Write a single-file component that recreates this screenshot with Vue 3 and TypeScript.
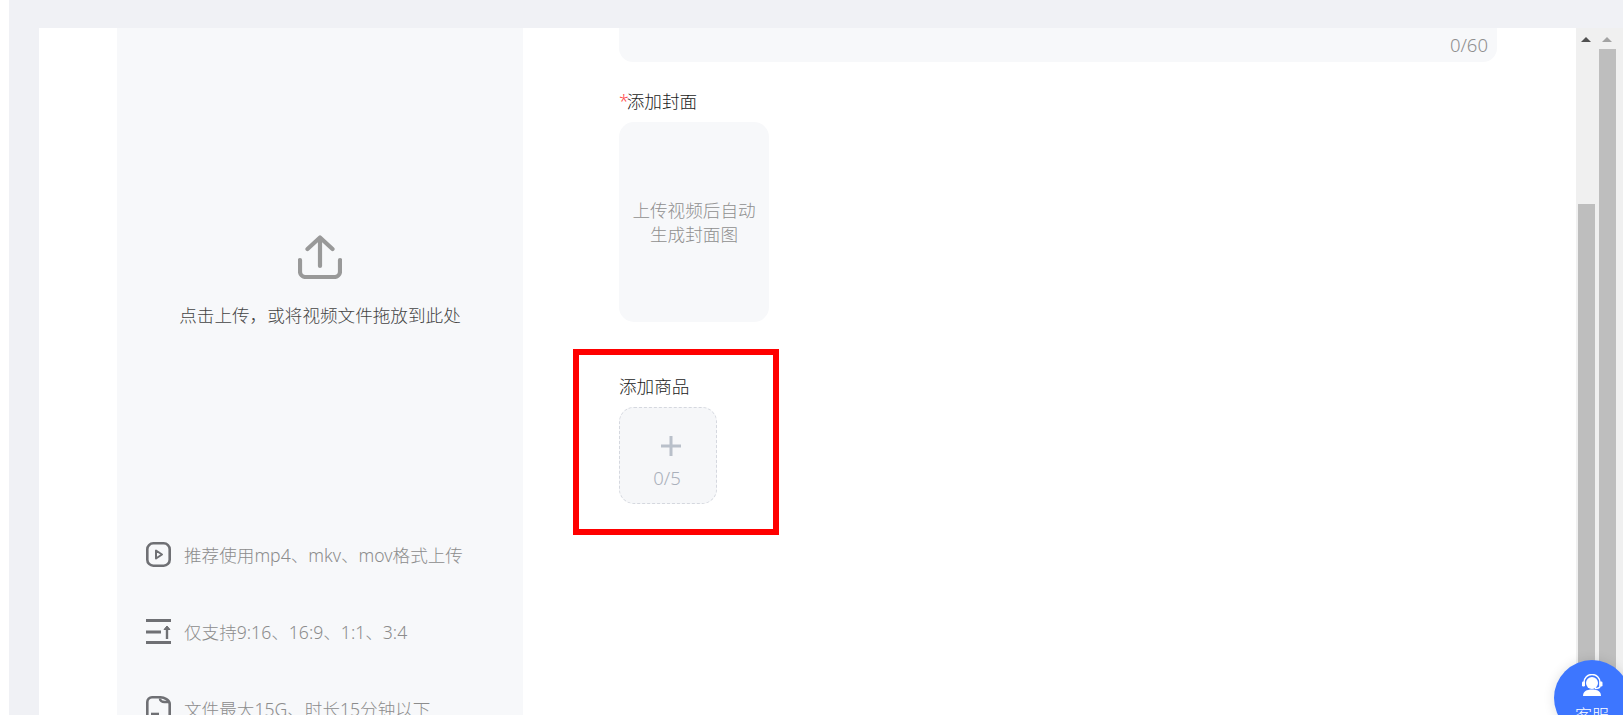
<template>
  <div class="page">
    <div class="topbar"></div>
    <div class="body">
      <main class="card">
        <aside class="upload-panel">
          <svg class="upload-icon" width="44" height="44" viewBox="0 0 44 44" fill="none" stroke="#999" stroke-width="4.200">
            <path d="M22 31V4M9.500 14 22 2.500 34.500 14" stroke-linecap="round" stroke-linejoin="round" />
            <path d="M2 25v11.500a5.500 5.500 0 0 0 5.500 5.500h29a5.500 5.500 0 0 0 5.500-5.500V25" stroke-linecap="round" />
          </svg>
          <p class="upload-text">点击上传，或将视频文件拖放到此处</p>
          <ul class="tips">
            <li v-for="tip in tips" :key="tip.text" class="tip">
              <svg width="25" height="25" viewBox="0 0 25 25" fill="none" stroke="#6f7074" stroke-width="2.600">
                <template v-if="tip.icon === 'play'">
                  <rect x="1.300" y="1.300" width="22.400" height="22.400" rx="6" />
                  <path d="M10 8.500v8l6-4z" stroke-width="2" stroke-linejoin="round" />
                </template>
                <template v-else-if="tip.icon === 'ratio'">
                  <path d="M0 1.500h25M0 13h15M0 23.500h25" stroke-width="3" />
                  <path d="M21 20V9" stroke-width="2.400" />
                  <path d="M18 10.500 21 7l3 3.500z" fill="#6f7074" stroke-width="1" />
                </template>
                <template v-else>
                  <path d="M1.300 6a4.700 4.700 0 0 1 4.700-4.700h8.500c3.500 0 9.200 2.500 9.200 6.500V20a4.700 4.700 0 0 1-4.700 4.700H6A4.700 4.700 0 0 1 1.300 20z" />
                  <path d="M14 2.500c0 2 2 3.500 4.500 3.500h4.500" />
                  <path d="M5 18h8" />
                </template>
              </svg>
              <span>{{ tip.text }}</span>
            </li>
          </ul>
        </aside>

        <section class="form">
          <div class="title-input">
            <span class="count">0/60</span>
          </div>

          <div class="field-label cover-label"><em>*</em>添加封面</div>
          <div class="cover-box">上传视频后自动生成封面图</div>

          <div class="field-label goods-label">添加商品</div>
          <button class="goods-add" type="button">
            <svg width="22" height="22" viewBox="0 0 22 22" stroke="#b9c0ca" stroke-width="3">
              <path d="M11 1v20M1 11h20" />
            </svg>
            <span>0/5</span>
          </button>
        </section>
      </main>

      <div class="scrollbar">
        <i class="arrow dark"></i>
        <div class="thumb inner"></div>
      </div>
      <div class="scrollbar outer">
        <i class="arrow"></i>
        <div class="thumb"></div>
      </div>
    </div>

    <div class="highlight"></div>

    <div class="service">
      <svg width="22" height="22" viewBox="0 0 22 22" fill="#fff">
        <circle cx="11" cy="9" r="6" />
        <path d="M2 22c0-4.500 3.500-6.500 9-6.500s9 2 9 6.500z" />
        <path d="M3 10V8.500a8 8 0 0 1 16 0V12c0 1.500-1.500 2.500-5 2.500" fill="none" stroke="#fff" stroke-width="1.500" />
        <rect x="1" y="7.500" width="3" height="5" rx="1.200" />
        <rect x="18.500" y="7.500" width="3" height="5" rx="1.200" />
      </svg>
      <span>客服</span>
    </div>
  </div>
</template>

<script setup lang="ts">
type Tip = { icon: 'play' | 'ratio' | 'file'; text: string }

const tips: Tip[] = [
  { icon: 'play', text: '推荐使用mp4、mkv、mov格式上传' },
  { icon: 'ratio', text: '仅支持9:16、16:9、1:1、3:4' },
  { icon: 'file', text: '文件最大15G、时长15分钟以下' },
]
</script>

<style>
html, body { margin: 0; background: #fff; overflow: hidden; }
</style>

<style scoped>
.page {
  position: relative;
  height: 715px;
  margin-left: 9px;
  overflow: hidden;
  background: #f0f1f5;
  font-family: "Noto Sans", "Noto Sans CJK SC", sans-serif;
  font-size: 17.6px;
  font-weight: 300;
}
.topbar { height: 28px; }
.body { display: flex; height: 687px; padding-left: 30px; }
.card { display: flex; flex: 1; min-width: 0; padding-left: 78px; background: #fff; }

.upload-panel {
  display: flex;
  flex-direction: column;
  align-items: center;
  flex: none;
  width: 406px;
  background: #f7f8fa;
}
.upload-icon { flex: none; margin-top: 207px; }
.upload-text { flex: none; margin: 23px 0 0; line-height: 26px; color: #444; }
.tips { flex: none; align-self: stretch; margin: 214px 0 0; padding: 0 0 0 29px; list-style: none; }
.tip { display: flex; align-items: center; gap: 13px; height: 25px; margin-bottom: 52px; color: #8c8c8c; white-space: nowrap; }
.tip svg { flex: none; }

.form { flex: 1; min-width: 0; padding: 0 79px 0 96px; }
.title-input {
  display: flex;
  align-items: flex-end;
  justify-content: flex-end;
  height: 34px;
  padding: 0 9px 5px 0;
  box-sizing: border-box;
  background: #f7f8fa;
  border-radius: 0 0 14px 14px;
}
.count { color: #8f8f8f; font-size: 18.5px; line-height: 24px; }
.field-label { line-height: 26px; color: #1a1a1a; }
.field-label em { margin-right: -2px; font-style: normal; color: #ff4d4f; }
.cover-label { margin-top: 26px; }
.cover-box {
  display: flex;
  align-items: center;
  justify-content: center;
  box-sizing: border-box;
  width: 150px;
  height: 200px;
  margin-top: 8px;
  padding: 0 12px;
  border-radius: 15px;
  background: #f7f8fa;
  color: #8f8f8f;
  line-height: 24px;
  text-align: center;
}
.goods-label { margin-top: 51px; }
.goods-add {
  display: flex;
  flex-direction: column;
  align-items: center;
  box-sizing: border-box;
  width: 98px;
  height: 97px;
  margin-top: 8px;
  padding: 27px 0 0 6px;
  border: 1px dashed #d5d8df;
  border-radius: 15px;
  background: #f6f7f9;
  color: #aab0bb;
  font: inherit;
}
.goods-add span { margin: 9px 8px 0 0; font-size: 18.5px; line-height: 24px; }

.scrollbar { flex: none; width: 23px; padding-top: 9px; box-sizing: border-box; background: #f0f0f0; }
.scrollbar.outer { width: 24px; }
.arrow {
  display: block;
  width: 0;
  margin-left: 3px;
  border: 5px solid transparent;
  border-top: 0;
  border-bottom: 5px solid #a3a3a3;
}
.arrow.dark { margin-left: 5px; border-bottom-color: #505050; }
.outer .arrow { margin-left: 3px; }
.thumb { width: 17px; height: 700px; margin-top: 7px; background: #bebebe; }
.scrollbar:not(.outer) .thumb { margin: 162px 0 0 2px; }

.highlight {
  position: absolute;
  left: 564px;
  top: 349px;
  width: 194px;
  height: 174px;
  border: 6px solid #f00;
}
.service {
  position: absolute;
  left: 1545px;
  top: 660px;
  display: flex;
  flex-direction: column;
  align-items: center;
  box-sizing: border-box;
  width: 76px;
  height: 76px;
  padding-top: 14px;
  border-radius: 50%;
  background: #3d76ff;
  box-shadow: 0 0 12px rgba(0, 0, 0, 0.12);
  color: #fff;
  font-size: 17px;
  line-height: 24px;
}
.service span { margin-top: 8px; }
</style>
